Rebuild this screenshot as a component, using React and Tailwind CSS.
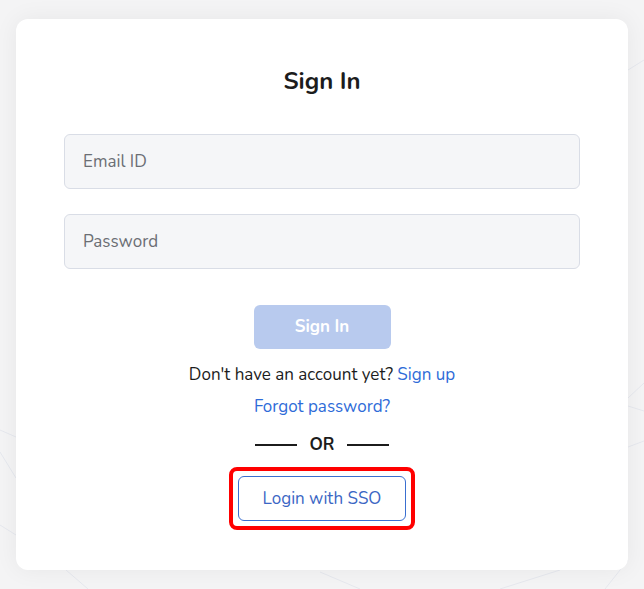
import React from "react";

const BackgroundLines = () => (
  <svg
    className="absolute inset-0 w-full h-full"
    viewBox="0 0 644 589"
    preserveAspectRatio="none"
    fill="none"
    stroke="#e6e8ee"
    strokeWidth="1"
  >
    <path d="M0 430 L16 437" />
    <path d="M0 452 L16 478" />
    <path d="M0 525 L16 535" />
    <path d="M66 570 L88 589" />
    <path d="M628 406 L644 411" />
    <path d="M628 447 L644 441" />
    <path d="M628 398 L644 383" />
    <path d="M605 589 L628 560" />
    <path d="M500 589 L560 570" />
    <path d="M628 70 L644 60" />
    <path d="M320 572 L360 589" />
  </svg>
);

export default function App() {
  return (
    <div
      className="relative w-[644px] h-[589px] overflow-hidden bg-[#f4f4f5]"
      style={{ fontFamily: "'Nunito', 'Noto Sans', sans-serif" }}
    >
      <BackgroundLines />
      <div className="relative pt-[19px] px-4">
        <div className="bg-white rounded-xl shadow-[0_0_24px_rgba(0,0,0,0.06)] h-[551px] flex flex-col items-center pt-[46px]">
          <h1 className="text-[24px] font-bold text-[#1c1c1c] leading-[32px]">Sign In</h1>

          <div className="w-[516px] mt-[37px] flex flex-col gap-[25px]">
            <input
              placeholder="Email ID"
              className="h-[55px] w-full rounded-md border border-[#d9dde6] bg-[#f5f6f8] px-[18px] text-[17px] text-[#333] placeholder:text-[#6b6e74] outline-none"
            />
            <input
              placeholder="Password"
              type="password"
              className="h-[55px] w-full rounded-md border border-[#d9dde6] bg-[#f5f6f8] px-[18px] text-[17px] text-[#333] placeholder:text-[#6b6e74] outline-none"
            />
          </div>

          <button className="mt-[36px] w-[137px] h-[44px] rounded-md bg-[#b8caee] text-white font-bold text-[17px]">
            Sign In
          </button>

          <p className="mt-[15px] text-[17px] leading-[22px] text-[#1c1c1c]">
            Don't have an account yet? <span className="text-[#2e6bd8]">Sign up</span>
          </p>
          <p className="mt-[10px] text-[17px] leading-[22px] text-[#2e6bd8]">Forgot password?</p>

          <div className="mt-[17px] flex items-center gap-[12px]">
            <span className="w-[42px] h-[2px] bg-[#1c1c1c]" />
            <span className="text-[17px] font-bold text-[#1c1c1c] leading-[20px]">OR</span>
            <span className="w-[42px] h-[2px] bg-[#1c1c1c]" />
          </div>

          <div className="mt-[12px] rounded-lg border-[4px] border-[#ff0000] p-[5px]">
            <button className="w-[168px] h-[45px] rounded-md border border-[#3a6fd0] text-[#3b66c4] text-[17px]">
              Login with SSO
            </button>
          </div>
        </div>
      </div>
    </div>
  );
}
